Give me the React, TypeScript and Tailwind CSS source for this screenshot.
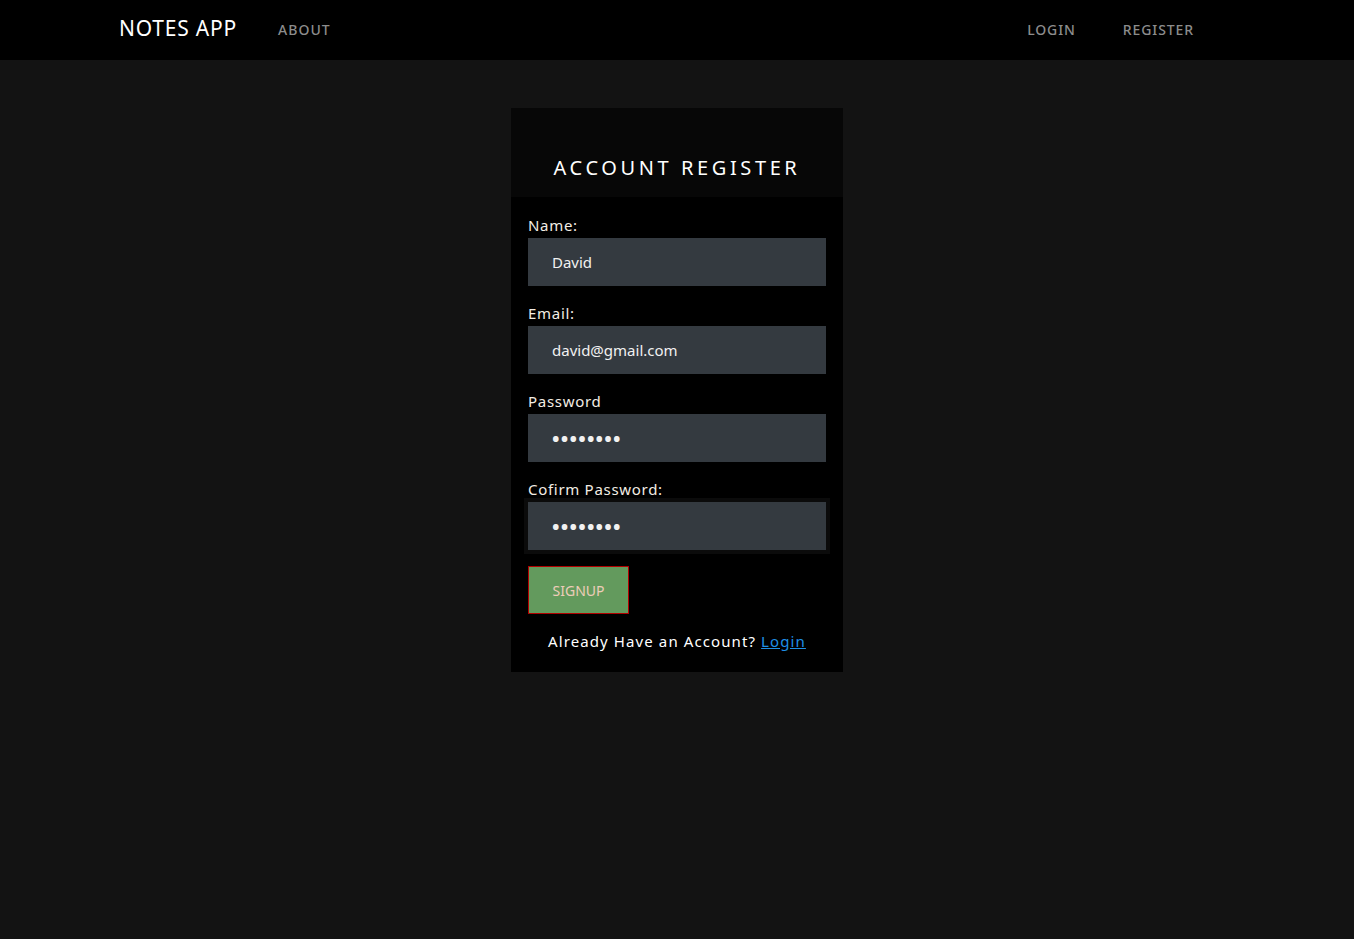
import React from 'react';

const font = { fontFamily: '"Noto Sans", "Open Sans", sans-serif' };

const Field: React.FC<{ label: string; value: string; type?: string; focused?: boolean }> = ({
  label,
  value,
  type = 'text',
  focused,
}) => (
  <div className="flex flex-col">
    <label className="text-[15px] leading-[22px] tracking-[0.7px] text-[#f3ede4] mb-[2px]">{label}</label>
    <input
      type={type}
      defaultValue={value}
      readOnly
      className={`h-12 w-full bg-[#343a40] text-[#f1f1f1] pl-6 outline-none ${
        type === 'password' ? 'text-[20px] tracking-[1.2px] font-bold' : 'text-[15px]'
      } ${focused ? 'shadow-[0_0_0_4px_#0b0b0b]' : ''}`}
      style={font}
    />
  </div>
);

const App: React.FC = () => {
  return (
    <div className="min-h-[939px] bg-[#131313]" style={font}>
      <nav className="h-[60px] bg-black flex items-center">
        <div className="w-[1140px] mx-auto px-3 flex items-center -mt-[2px]">
          <span className="text-white text-[21px] tracking-[0.8px]">NOTES APP</span>
          <a className="ml-[41px] text-[14px] tracking-[1px] font-medium text-[#8c8c8c]">ABOUT</a>
          <div className="ml-auto flex items-center gap-[47px] mr-[41px]">
            <a className="text-[14px] tracking-[0.9px] font-medium text-[#8c8c8c]">LOGIN</a>
            <a className="text-[14px] tracking-[0.9px] font-medium text-[#8c8c8c]">REGISTER</a>
          </div>
        </div>
      </nav>

      <div className="flex justify-center pt-12">
        <div className="w-[332px] bg-black">
          <div className="h-[89px] bg-[#070707] flex items-end justify-center pb-[14px]">
            <h2 className="text-white text-[20px] tracking-[3.6px]">ACCOUNT REGISTER</h2>
          </div>
          <form className="px-[17px] pt-[17px] pb-[19px] flex flex-col gap-4">
            <Field label="Name:" value="David" />
            <Field label="Email:" value="david@gmail.com" />
            <Field label="Password" value="password" type="password" />
            <Field label="Cofirm Password:" value="password" type="password" focused />
            <div>
              <button
                type="button"
                className="w-[101px] h-[48px] bg-[#639a5d] border border-[#b30000] text-[#edcdb9] text-[14px]"
                style={font}
              >
                SIGNUP
              </button>
            </div>
            <p className="text-center text-[15px] tracking-[1.1px] text-white">
              Already Have an Account?{' '}
              <a className="text-[#1f8fe6] underline">Login</a>
            </p>
          </form>
        </div>
      </div>
    </div>
  );
};

export default App;
